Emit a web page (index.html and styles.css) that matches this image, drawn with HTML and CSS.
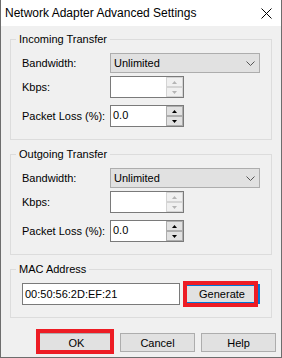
FILE: index.html
```html
<!DOCTYPE html>
<html>
<head>
<meta charset="utf-8">
<link rel="stylesheet" href="styles.css">
</head>
<body>
<div class="window">
  <div class="titlebar">
    <span class="title">Network Adapter Advanced Settings</span>
    <svg class="close" width="11" height="11" viewBox="0 0 11 11"><path d="M0.5 0.5 L10.5 10.5 M10.5 0.5 L0.5 10.5" stroke="#000" stroke-width="1" fill="none"/></svg>
  </div>
  <div class="content">
    <fieldset class="group g-in">
      <legend>Incoming Transfer</legend>
      <div class="row r-combo">
        <label>Bandwidth:</label>
        <div class="combo"><span>Unlimited</span><svg width="9" height="5" viewBox="0 0 9 5"><polyline points="0.5,0.5 4.5,4.5 8.5,0.5" fill="none" stroke="#555" stroke-width="1"/></svg></div>
      </div>
      <div class="row r-kbps">
        <label>Kbps:</label>
        <div class="spin disabled">
          <div class="spin-text"></div>
          <div class="spin-btns">
            <div class="sb"><svg width="5" height="3" viewBox="0 0 5 3"><polygon points="2.5,0 5,3 0,3"/></svg></div>
            <div class="sb"><svg width="5" height="3" viewBox="0 0 5 3"><polygon points="0,0 5,0 2.5,3"/></svg></div>
          </div>
        </div>
      </div>
      <div class="row r-loss">
        <label>Packet Loss (%):</label>
        <div class="spin">
          <div class="spin-text">0.0</div>
          <div class="spin-btns">
            <div class="sb"><svg width="5" height="3" viewBox="0 0 5 3"><polygon points="2.5,0 5,3 0,3"/></svg></div>
            <div class="sb"><svg width="5" height="3" viewBox="0 0 5 3"><polygon points="0,0 5,0 2.5,3"/></svg></div>
          </div>
        </div>
      </div>
    </fieldset>

    <fieldset class="group g-out">
      <legend>Outgoing Transfer</legend>
      <div class="row r-combo">
        <label>Bandwidth:</label>
        <div class="combo"><span>Unlimited</span><svg width="9" height="5" viewBox="0 0 9 5"><polyline points="0.5,0.5 4.5,4.5 8.5,0.5" fill="none" stroke="#555" stroke-width="1"/></svg></div>
      </div>
      <div class="row r-kbps">
        <label>Kbps:</label>
        <div class="spin disabled">
          <div class="spin-text"></div>
          <div class="spin-btns">
            <div class="sb"><svg width="5" height="3" viewBox="0 0 5 3"><polygon points="2.5,0 5,3 0,3"/></svg></div>
            <div class="sb"><svg width="5" height="3" viewBox="0 0 5 3"><polygon points="0,0 5,0 2.5,3"/></svg></div>
          </div>
        </div>
      </div>
      <div class="row r-loss">
        <label>Packet Loss (%):</label>
        <div class="spin">
          <div class="spin-text">0.0</div>
          <div class="spin-btns">
            <div class="sb"><svg width="5" height="3" viewBox="0 0 5 3"><polygon points="2.5,0 5,3 0,3"/></svg></div>
            <div class="sb"><svg width="5" height="3" viewBox="0 0 5 3"><polygon points="0,0 5,0 2.5,3"/></svg></div>
          </div>
        </div>
      </div>
    </fieldset>

    <fieldset class="group g-mac">
      <legend>MAC Address</legend>
      <div class="mac-row">
        <div class="mac">00:50:56:2D:EF:21</div>
        <div class="btn-wrap gen-wrap">
          <button class="btn btn-default">Generate</button>
          <span class="mark mark-gen"></span>
        </div>
      </div>
    </fieldset>

    <div class="actions">
      <div class="btn-wrap">
        <button class="btn">OK</button>
        <span class="mark mark-ok"></span>
      </div>
      <button class="btn">Cancel</button>
      <button class="btn">Help</button>
    </div>
  </div>
</div>
</body>
</html>
```

FILE: styles.css
```css
* { box-sizing: border-box; }
html, body { margin: 0; padding: 0; }
body {
  width: 282px;
  height: 358px;
  overflow: hidden;
  font-family: "Liberation Sans", Arial, sans-serif;
  font-size: 11px;
  color: #000;
  background: #f0f0f0;
}
.window {
  width: 282px;
  height: 358px;
  border: 1px solid #6d6d6d;
  border-top: 0;
  background: #f0f0f0;
  display: flex;
  flex-direction: column;
}
.titlebar {
  height: 26px;
  flex: none;
  background: #fff;
  display: flex;
  align-items: center;
  justify-content: space-between;
  padding-left: 4px;
  padding-right: 9px;
}
.title {
  font-size: 12px;
  line-height: 14px;
  margin-top: -1px;
}
.close { display: block; margin-top: 1px; }
.content {
  padding: 0 9px;
  display: flex;
  flex-direction: column;
}
.group {
  margin: 0;
  border: 1px solid #dcdcdc;
  padding: 7px 11px 12px 11px;
  min-width: 0;
}
.group legend {
  padding: 0 3px;
  margin-left: -6px;
  line-height: 13px;
  font-size: 11px;
}
.g-in { margin-top: 7px; }
.g-out, .g-mac { margin-top: 8px; }
.row { display: flex; align-items: center; }
.row label { width: 88px; flex: none; }
.r-combo { height: 20px; }
.r-kbps { height: 22px; margin-top: 3px; }
.r-loss { height: 22px; margin-top: 7px; }
.combo {
  width: 150px;
  height: 20px;
  background: #e1e1e1;
  border: 1px solid #adadad;
  display: flex;
  align-items: center;
  justify-content: space-between;
  padding-left: 3px;
  padding-right: 4px;
}
.combo svg { display: block; }
.spin {
  width: 74px;
  height: 22px;
  border: 1px solid #7a7a7a;
  background: #fff;
  display: flex;
}
.spin-text {
  flex: 1;
  padding-left: 2px;
  line-height: 19px;
}
.spin-btns {
  width: 17px;
  display: flex;
  flex-direction: column;
}
.sb {
  height: 10px;
  border: 1px solid #adadad;
  background: #e1e1e1;
  display: flex;
  align-items: center;
  justify-content: center;
}
.sb svg { display: block; fill: #000; }
.disabled .sb { background: #f0f0f0; border-color: #d4d4d4; }
.disabled .sb svg { fill: #b4b4b4; }
.mac-row { display: flex; align-items: center; height: 22px; }
.mac {
  width: 158px;
  height: 22px;
  border: 1px solid #7a7a7a;
  background: #fff;
  padding-left: 2px;
  line-height: 20px;
}
.btn-wrap { position: relative; display: flex; }
.gen-wrap { margin-left: 4px; }
.btn {
  width: 75px;
  height: 19px;
  border: 1px solid #adadad;
  background: #e1e1e1;
  font-family: inherit;
  font-size: 11px;
  color: #000;
  padding: 0;
  margin: 0;
}
.btn-default {
  width: 76px;
  height: 20px;
  border: 2px solid #0078d7;
}
.actions {
  display: flex;
  justify-content: flex-end;
  gap: 6px;
  margin-top: 15px;
  margin-right: -4px;
}
.mark {
  position: absolute;
  border: 4px solid #ed1c24;
  pointer-events: none;
}
.mark-ok { left: -3px; top: -4px; width: 78px; height: 25px; }
.mark-gen { left: -1px; top: -3px; width: 75px; height: 26px; }
```
